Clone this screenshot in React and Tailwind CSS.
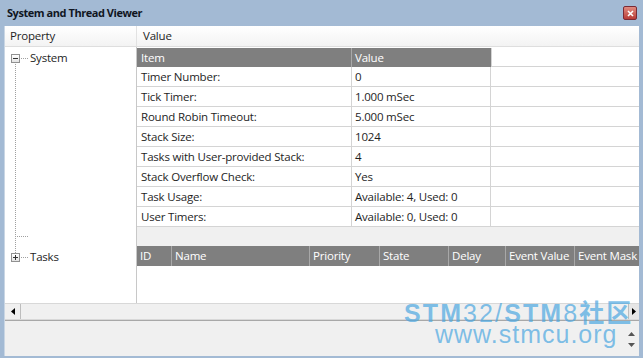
const rows = [
  ['Timer Number:', '0'],
  ['Tick Timer:', '1.000 mSec'],
  ['Round Robin Timeout:', '5.000 mSec'],
  ['Stack Size:', '1024'],
  ['Tasks with User-provided Stack:', '4'],
  ['Stack Overflow Check:', 'Yes'],
  ['Task Usage:', 'Available: 4, Used: 0'],
  ['User Timers:', 'Available: 0, Used: 0'],
];

const taskCols = [
  ['ID', 'w-[35px]'],
  ['Name', 'w-[138px]'],
  ['Priority', 'w-[70px]'],
  ['State', 'w-[69px]'],
  ['Delay', 'w-[57px]'],
  ['Event Value', 'w-[69px]'],
  ['Event Mask', 'flex-1'],
];

const TreeBox = ({ open }) => (
  <span className="relative inline-flex w-[9px] h-[9px] border border-[#919191] bg-gradient-to-b from-white to-[#e4e4e4] items-center justify-center">
    <span className="absolute w-[5px] h-px bg-[#333]"></span>
    {!open && <span className="absolute w-px h-[5px] bg-[#333]"></span>}
  </span>
);

export default function App() {
  return (
    <div className="w-[643px] h-[358px] bg-[#a3bad4] flex flex-col text-[11.5px] tracking-[-0.2px] text-[#1e1e1e] overflow-hidden relative" style={{ fontFamily: '"Open Sans", "Noto Sans", sans-serif' }}>
      {/* Title bar */}
      <div className="h-[26px] shrink-0 flex items-center justify-between pl-[7px] pr-[6px]">
        <span className="font-bold text-[11px] text-[#10161f] tracking-[-0.45px]">System and Thread Viewer</span>
        <span className="w-[14px] h-[14px] rounded-[2px] border border-[#7a2a35] bg-gradient-to-b from-[#e08a80] to-[#b83a36] flex items-center justify-center">
          <svg width="7" height="7" viewBox="0 0 7 7">
            <path d="M1 1L6 6M6 1L1 6" stroke="#fff" strokeWidth="1.6" />
          </svg>
        </span>
      </div>

      {/* Body */}
      <div className="flex-1 flex flex-col ml-[4px] mr-[4px] mb-[2px] bg-white border-l border-[#c9d6e4]">
        {/* Header */}
        <div className="h-[21px] shrink-0 flex bg-gradient-to-b from-white to-[#f3f3f3] border-b border-[#dedede]">
          <div className="w-[132px] pl-[5px] flex items-center border-r border-[#e2e2e2]">Property</div>
          <div className="flex-1 pl-[6px] flex items-center">Value</div>
        </div>

        {/* Content */}
        <div className="h-[256px] shrink-0 flex">
          {/* Tree */}
          <div className="w-[132px] shrink-0 border-r border-[#c8c8c8] relative">
            <div className="absolute left-[10px] top-[15px] bottom-[50px] border-l border-dotted border-[#a0a0a0]"></div>
            <div className="absolute left-[10px] top-[189px] w-[13px] border-t border-dotted border-[#a0a0a0]"></div>
            <div className="flex items-center h-[20px] mt-[1px] pl-[6px]">
              <TreeBox open />
              <span className="w-[7px] border-t border-dotted border-[#a0a0a0] ml-[1px]"></span>
              <span className="ml-[2px]">System</span>
            </div>
            <div className="flex items-center h-[20px] mt-[179px] pl-[6px]">
              <TreeBox />
              <span className="w-[7px] border-t border-dotted border-[#a0a0a0] ml-[1px]"></span>
              <span className="ml-[2px]">Tasks</span>
            </div>
          </div>

          {/* Value panel */}
          <div className="flex-1 flex flex-col pt-[1px]">
            <div className="flex h-[19px]">
              <div className="w-[215px] bg-[#7f7f7f] text-white pl-[4px] flex items-center border-r border-[#a8a8a8]">Item</div>
              <div className="w-[139px] bg-[#7f7f7f] text-white pl-[3px] flex items-center">Value</div>
              <div className="flex-1 border-b border-l border-[#d4d4d4]"></div>
            </div>
            {rows.map(([k, v]) => (
              <div key={k} className="flex h-[20px] border-b border-[#d4d4d4]">
                <div className="w-[215px] pl-[4px] flex items-center border-r border-[#d4d4d4]">{k}</div>
                <div className="w-[139px] pl-[3px] flex items-center border-r border-[#d4d4d4]">{v}</div>
                <div className="flex-1"></div>
              </div>
            ))}
            <div className="h-[19px] bg-[#f0f0f0]"></div>
            <div className="flex h-[20px] bg-[#7f7f7f] text-white">
              {taskCols.map(([c, w], i) => (
                <div key={c} className={`${w} pl-[3px] flex items-center whitespace-nowrap overflow-hidden ${i < taskCols.length - 1 ? 'border-r border-[#a8a8a8]' : ''}`}>{c}</div>
              ))}
            </div>
            <div className="flex-1"></div>
          </div>
        </div>

        {/* Horizontal scrollbar */}
        <div className="h-[17px] shrink-0 flex bg-[#f0f0f0] border-y border-[#d8d8d8]">
          <div className="w-[16px] flex items-center justify-center border-r border-[#bdbdbd]">
            <svg width="4" height="7" viewBox="0 0 4 7"><path d="M4 0L0 3.5L4 7Z" fill="#000" /></svg>
          </div>
          <div className="flex-1"></div>
          <div className="w-[11px] flex items-center justify-center bg-[#e6e6e6] border-l border-[#bdbdbd]">
            <svg width="4" height="7" viewBox="0 0 4 7"><path d="M0 0L4 3.5L0 7Z" fill="#000" /></svg>
          </div>
        </div>

        {/* Bottom panel */}
        <div className="flex-1 flex bg-[#f0f0f0] border-t border-[#a8a8a8]">
          <div className="flex-1"></div>
          <div className="w-[15px] flex flex-col items-center justify-center gap-[7px] mt-[2px]">
            <svg width="7" height="4" viewBox="0 0 7 4"><path d="M0 4L3.5 0L7 4Z" fill="#555" /></svg>
            <svg width="7" height="4" viewBox="0 0 7 4"><path d="M0 0L3.5 4L7 0Z" fill="#555" /></svg>
          </div>
        </div>
      </div>

      {/* Watermark */}
      <div className="absolute left-[404px] top-[300px] text-[#4aa6e0]/70 pointer-events-none" style={{ fontFamily: '"Liberation Sans", "Noto Sans CJK SC", sans-serif' }}>
        <div className="text-[25px] leading-[22px] tracking-[2.1px] whitespace-nowrap">
          <span className="font-bold">STM</span><span>32/</span><span className="font-bold">STM</span><span>8</span><span className="font-bold" style={{ fontFamily: '"Noto Sans CJK SC", sans-serif' }}>社区</span>
        </div>
        <div className="text-[25px] leading-[20px] ml-[31px] tracking-[1px] whitespace-nowrap">www.stmcu.org</div>
      </div>
    </div>
  );
}
